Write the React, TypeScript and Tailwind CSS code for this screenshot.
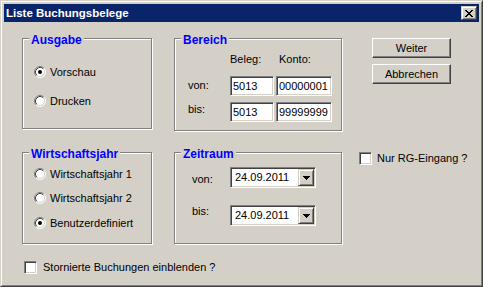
import React from "react";

function Radio({ checked }: { checked?: boolean }) {
  return (
    <svg width="12" height="12" viewBox="0 0 12 12" className="shrink-0">
      <circle cx="6" cy="6" r="5" fill="#fff" />
      <path d="M2.11 9.89 A5.5 5.5 0 0 1 9.89 2.11" stroke="#808080" fill="none" />
      <path d="M9.89 2.11 A5.5 5.5 0 0 1 2.11 9.89" stroke="#ffffff" fill="none" />
      <path d="M2.82 9.18 A4.5 4.5 0 0 1 9.18 2.82" stroke="#404040" fill="none" />
      <path d="M9.18 2.82 A4.5 4.5 0 0 1 2.82 9.18" stroke="#d4d0c8" fill="none" />
      {checked && <circle cx="6" cy="6" r="2" fill="#000" />}
    </svg>
  );
}

function Check() {
  return (
    <div className="w-[13px] h-[13px] shrink-0 bg-white border border-t-[#808080] border-l-[#808080] border-r-white border-b-white shadow-[inset_1px_1px_0_#404040,inset_-1px_-1px_0_#d4d0c8]" />
  );
}

function Field({ value, w }: { value: string; w: string }) {
  return (
    <div
      className={`${w} h-[20px] bg-white border border-t-[#808080] border-l-[#808080] border-r-white border-b-white shadow-[inset_1px_1px_0_#404040,inset_-1px_-1px_0_#d4d0c8] flex items-center px-[1px] whitespace-nowrap overflow-hidden`}
    >
      <span className="pl-[1px]">{value}</span>
    </div>
  );
}

function Combo({ value }: { value: string }) {
  return (
    <div className="w-[86px] h-[21px] bg-white border border-t-[#808080] border-l-[#808080] border-r-white border-b-white shadow-[inset_1px_1px_0_#404040,inset_-1px_-1px_0_#d4d0c8] flex p-[1px]">
      <div className="flex-1 flex items-center pl-[3px] whitespace-nowrap">{value}</div>
      <div className="w-[16px] h-[17px] bg-[#d4d0c8] border border-t-[#d4d0c8] border-l-[#d4d0c8] border-r-[#404040] border-b-[#404040] shadow-[inset_1px_1px_0_#ffffff,inset_-1px_-1px_0_#808080] flex items-center justify-center">
        <svg width="7" height="4" viewBox="0 0 7 4" shapeRendering="crispEdges">
          <rect x="0" y="0" width="7" height="1" fill="#000" />
          <rect x="1" y="1" width="5" height="1" fill="#000" />
          <rect x="2" y="2" width="3" height="1" fill="#000" />
          <rect x="3" y="3" width="1" height="1" fill="#000" />
        </svg>
      </div>
    </div>
  );
}

function Btn({ children }: { children: React.ReactNode }) {
  return (
    <div className="w-[79px] h-[20px] flex items-center justify-center border border-t-white border-l-white border-r-[#404040] border-b-[#404040] shadow-[inset_-1px_-1px_0_#808080]">
      {children}
    </div>
  );
}

function Group({
  title,
  className,
  children,
}: {
  title: string;
  className: string;
  children: React.ReactNode;
}) {
  return (
    <div
      className={`relative border border-[#808080] shadow-[inset_1px_1px_0_#ffffff,1px_1px_0_#ffffff] ${className}`}
    >
      <span className="absolute left-[6px] top-[-6px] bg-[#d4d0c8] px-[2px] text-[12px] leading-[14px] font-bold text-[#0000ff] whitespace-nowrap">
        {title}
      </span>
      {children}
    </div>
  );
}

function RadioRow({ label, checked }: { label: string; checked?: boolean }) {
  return (
    <div className="flex items-center h-[12px] gap-[4px] whitespace-nowrap">
      <Radio checked={checked} />
      <span>{label}</span>
    </div>
  );
}

const xRows: [number, number, number][] = [
  [0, 0, 2],
  [6, 0, 2],
  [1, 1, 2],
  [5, 1, 2],
  [2, 2, 4],
  [3, 3, 2],
  [2, 4, 4],
  [1, 5, 2],
  [5, 5, 2],
  [0, 6, 2],
  [6, 6, 2],
];

export default function App() {
  return (
    <div className="w-[483px] h-[287px] font-['Liberation_Sans',Arial,sans-serif] text-black text-[11px] leading-[13px]">
      <div className="w-full h-full bg-[#d4d0c8] border border-t-[#d4d0c8] border-l-[#d4d0c8] border-r-[#404040] border-b-[#404040]">
        <div className="w-full h-full border border-t-white border-l-white border-r-[#808080] border-b-[#808080] p-[2px] flex flex-col">
          {/* Title bar */}
          <div className="h-[18px] bg-[#0a246a] flex items-center pl-[2px] pr-[2px]">
            <span className="text-white font-bold text-[11.5px] leading-[14px] whitespace-nowrap">
              Liste Buchungsbelege
            </span>
            <div className="ml-auto w-[16px] h-[14px] bg-[#d4d0c8] border border-t-[#d4d0c8] border-l-[#d4d0c8] border-r-[#404040] border-b-[#404040] shadow-[inset_1px_1px_0_#ffffff,inset_-1px_-1px_0_#808080] flex items-center justify-center">
              <svg width="8" height="7" viewBox="0 0 8 7" shapeRendering="crispEdges">
                {xRows.map(([x, y, w], i) => (
                  <rect key={i} x={x} y={y} width={w} height="1" fill="#000" />
                ))}
              </svg>
            </div>
          </div>

          {/* Body */}
          <div className="flex-1 flex pl-[18px] pt-[16px]">
            {/* Column 1 */}
            <div className="w-[130px] flex flex-col">
              <Group title="Ausgabe" className="w-[130px] h-[91px]">
                <div className="flex flex-col pl-[11px] pt-[27px] gap-[17px]">
                  <RadioRow label="Vorschau" checked />
                  <RadioRow label="Drucken" />
                </div>
              </Group>
              <Group title="Wirtschaftsjahr" className="w-[130px] h-[92px] mt-[23px]">
                <div className="flex flex-col pl-[11px] pt-[15px]">
                  <RadioRow label="Wirtschaftsjahr 1" />
                  <div className="mt-[12px]">
                    <RadioRow label="Wirtschaftsjahr 2" />
                  </div>
                  <div className="mt-[13px]">
                    <RadioRow label="Benutzerdefiniert" checked />
                  </div>
                </div>
              </Group>
              <div className="mt-[17px] pl-[2px] flex items-center gap-[6px] h-[13px] whitespace-nowrap">
                <Check />
                <span>Stornierte Buchungen einblenden ?</span>
              </div>
            </div>

            {/* Column 2 */}
            <div className="w-[168px] ml-[22px] flex flex-col">
              <Group title="Bereich" className="w-[168px] h-[93px]">
                <div className="flex flex-col pt-[14px] pl-[13px]">
                  <div className="flex">
                    <span className="w-[42px]" />
                    <span className="w-[46px]">Beleg:</span>
                    <span className="pl-[3px]">Konto:</span>
                  </div>
                  <div className="flex items-start mt-[10px]">
                    <span className="w-[42px] mt-[3px]">von:</span>
                    <Field value="5013" w="w-[44px]" />
                    <div className="ml-[2px]">
                      <Field value="00000001" w="w-[56px]" />
                    </div>
                  </div>
                  <div className="flex items-start mt-[6px]">
                    <span className="w-[42px] mt-[1px]">bis:</span>
                    <Field value="5013" w="w-[44px]" />
                    <div className="ml-[2px]">
                      <Field value="99999999" w="w-[56px]" />
                    </div>
                  </div>
                </div>
              </Group>
              <Group title="Zeitraum" className="w-[168px] h-[92px] mt-[21px]">
                <div className="flex flex-col pt-[14px] pl-[17px]">
                  <div className="flex items-start">
                    <span className="w-[38px] mt-[6px]">von:</span>
                    <Combo value="24.09.2011" />
                  </div>
                  <div className="flex items-start mt-[17px]">
                    <span className="w-[38px] mt-[0px]">bis:</span>
                    <Combo value="24.09.2011" />
                  </div>
                </div>
              </Group>
            </div>

            {/* Column 3 */}
            <div className="flex flex-col">
              <div className="ml-[30px] flex flex-col gap-[6px]">
                <Btn>Weiter</Btn>
                <Btn>Abbrechen</Btn>
              </div>
              <div className="ml-[17px] mt-[68px] flex items-center gap-[5px] h-[13px] whitespace-nowrap">
                <Check />
                <span>Nur RG-Eingang ?</span>
              </div>
            </div>
          </div>
        </div>
      </div>
    </div>
  );
}
